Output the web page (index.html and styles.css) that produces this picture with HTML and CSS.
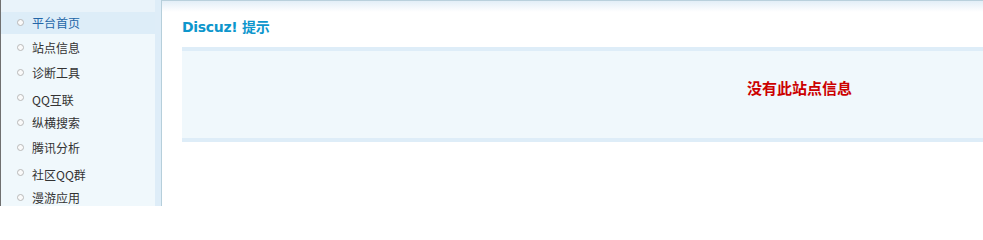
FILE: index.html
```html
<!DOCTYPE html>
<html lang="zh-CN">
<head>
<meta charset="utf-8">
<title>Discuz! 提示</title>
<link rel="stylesheet" href="styles.css">
</head>
<body>
<div class="layout">
  <aside class="sidebar">
    <ul class="nav">
      <li class="nav-item nav-item--active"><span class="bullet"></span><span class="label">平台首页</span></li>
      <li class="nav-item"><span class="bullet"></span><span class="label">站点信息</span></li>
      <li class="nav-item"><span class="bullet"></span><span class="label">诊断工具</span></li>
      <li class="nav-item nav-item--latin"><span class="bullet"></span><span class="label">QQ互联</span></li>
      <li class="nav-item"><span class="bullet"></span><span class="label">纵横搜索</span></li>
      <li class="nav-item"><span class="bullet"></span><span class="label">腾讯分析</span></li>
      <li class="nav-item nav-item--latin"><span class="bullet"></span><span class="label">社区QQ群</span></li>
      <li class="nav-item"><span class="bullet"></span><span class="label">漫游应用</span></li>
    </ul>
  </aside>
  <main class="main">
    <h3 class="title">Discuz! 提示</h3>
    <div class="msgbox">
      <p class="msg">没有此站点信息</p>
    </div>
  </main>
</div>
</body>
</html>
```
FILE: styles.css
```css
html, body {
  margin: 0;
  padding: 0;
  background: #fff;
  overflow: hidden;
}
body {
  font: 12px "Noto Sans CJK SC", "Liberation Sans", sans-serif;
  color: #333;
}
.layout {
  display: flex;
  height: 206px;
}
.sidebar {
  flex: 0 0 auto;
  width: 160px;
  border-left: 1px solid #707070;
  border-right: 1px solid #b6cfdb;
  background: linear-gradient(#e9f3fa 0, #e9f3fa 12px, #f0f8fc 12px);
  display: flex;
}
.nav {
  list-style: none;
  margin: 0;
  padding: 12px 0 0;
  flex: 1;
  border-right: 6px solid #deedf8;
}
.nav-item {
  display: flex;
  align-items: center;
  height: 22px;
  margin-bottom: 3px;
  padding-left: 16px;
  padding-bottom: 1px;
  box-sizing: border-box;
}
.nav-item--active {
  background: #ddedf8;
}
.nav-item--active .label {
  color: #2366a8;
}
.nav-item--latin .label {
  padding-top: 5px;
}
.bullet {
  width: 5px;
  height: 5px;
  border: 1px solid #b8b8b8;
  border-radius: 50%;
  background: #fafafa;
  margin-right: 8px;
  flex: 0 0 auto;
}
.label {
  color: #333;
  line-height: 16px;
}
.main {
  flex: 1;
  min-width: 0;
  overflow: hidden;
  border-top: 1px solid #b9d0dc;
  background: linear-gradient(#e3eef7, #ffffff 11px);
  padding: 16px 0 0 20px;
}
.title {
  margin: 0;
  font: bold 14px/20px "DejaVu Sans", "Noto Sans CJK SC", sans-serif;
  letter-spacing: -0.3px;
  color: #0d96cc;
}
.msgbox {
  margin-top: 10px;
  width: 1235px;
  height: 87px;
  border-top: 4px solid #deedf8;
  border-bottom: 4px solid #deedf8;
  background: #f0f8fc;
  padding-top: 27px;
  box-sizing: content-box;
}
.msgbox {
  height: 60px;
}
.msg {
  margin: 0;
  text-align: center;
  font: bold 15px/20px "Noto Sans CJK SC", sans-serif;
  color: #cc0000;
}
```
